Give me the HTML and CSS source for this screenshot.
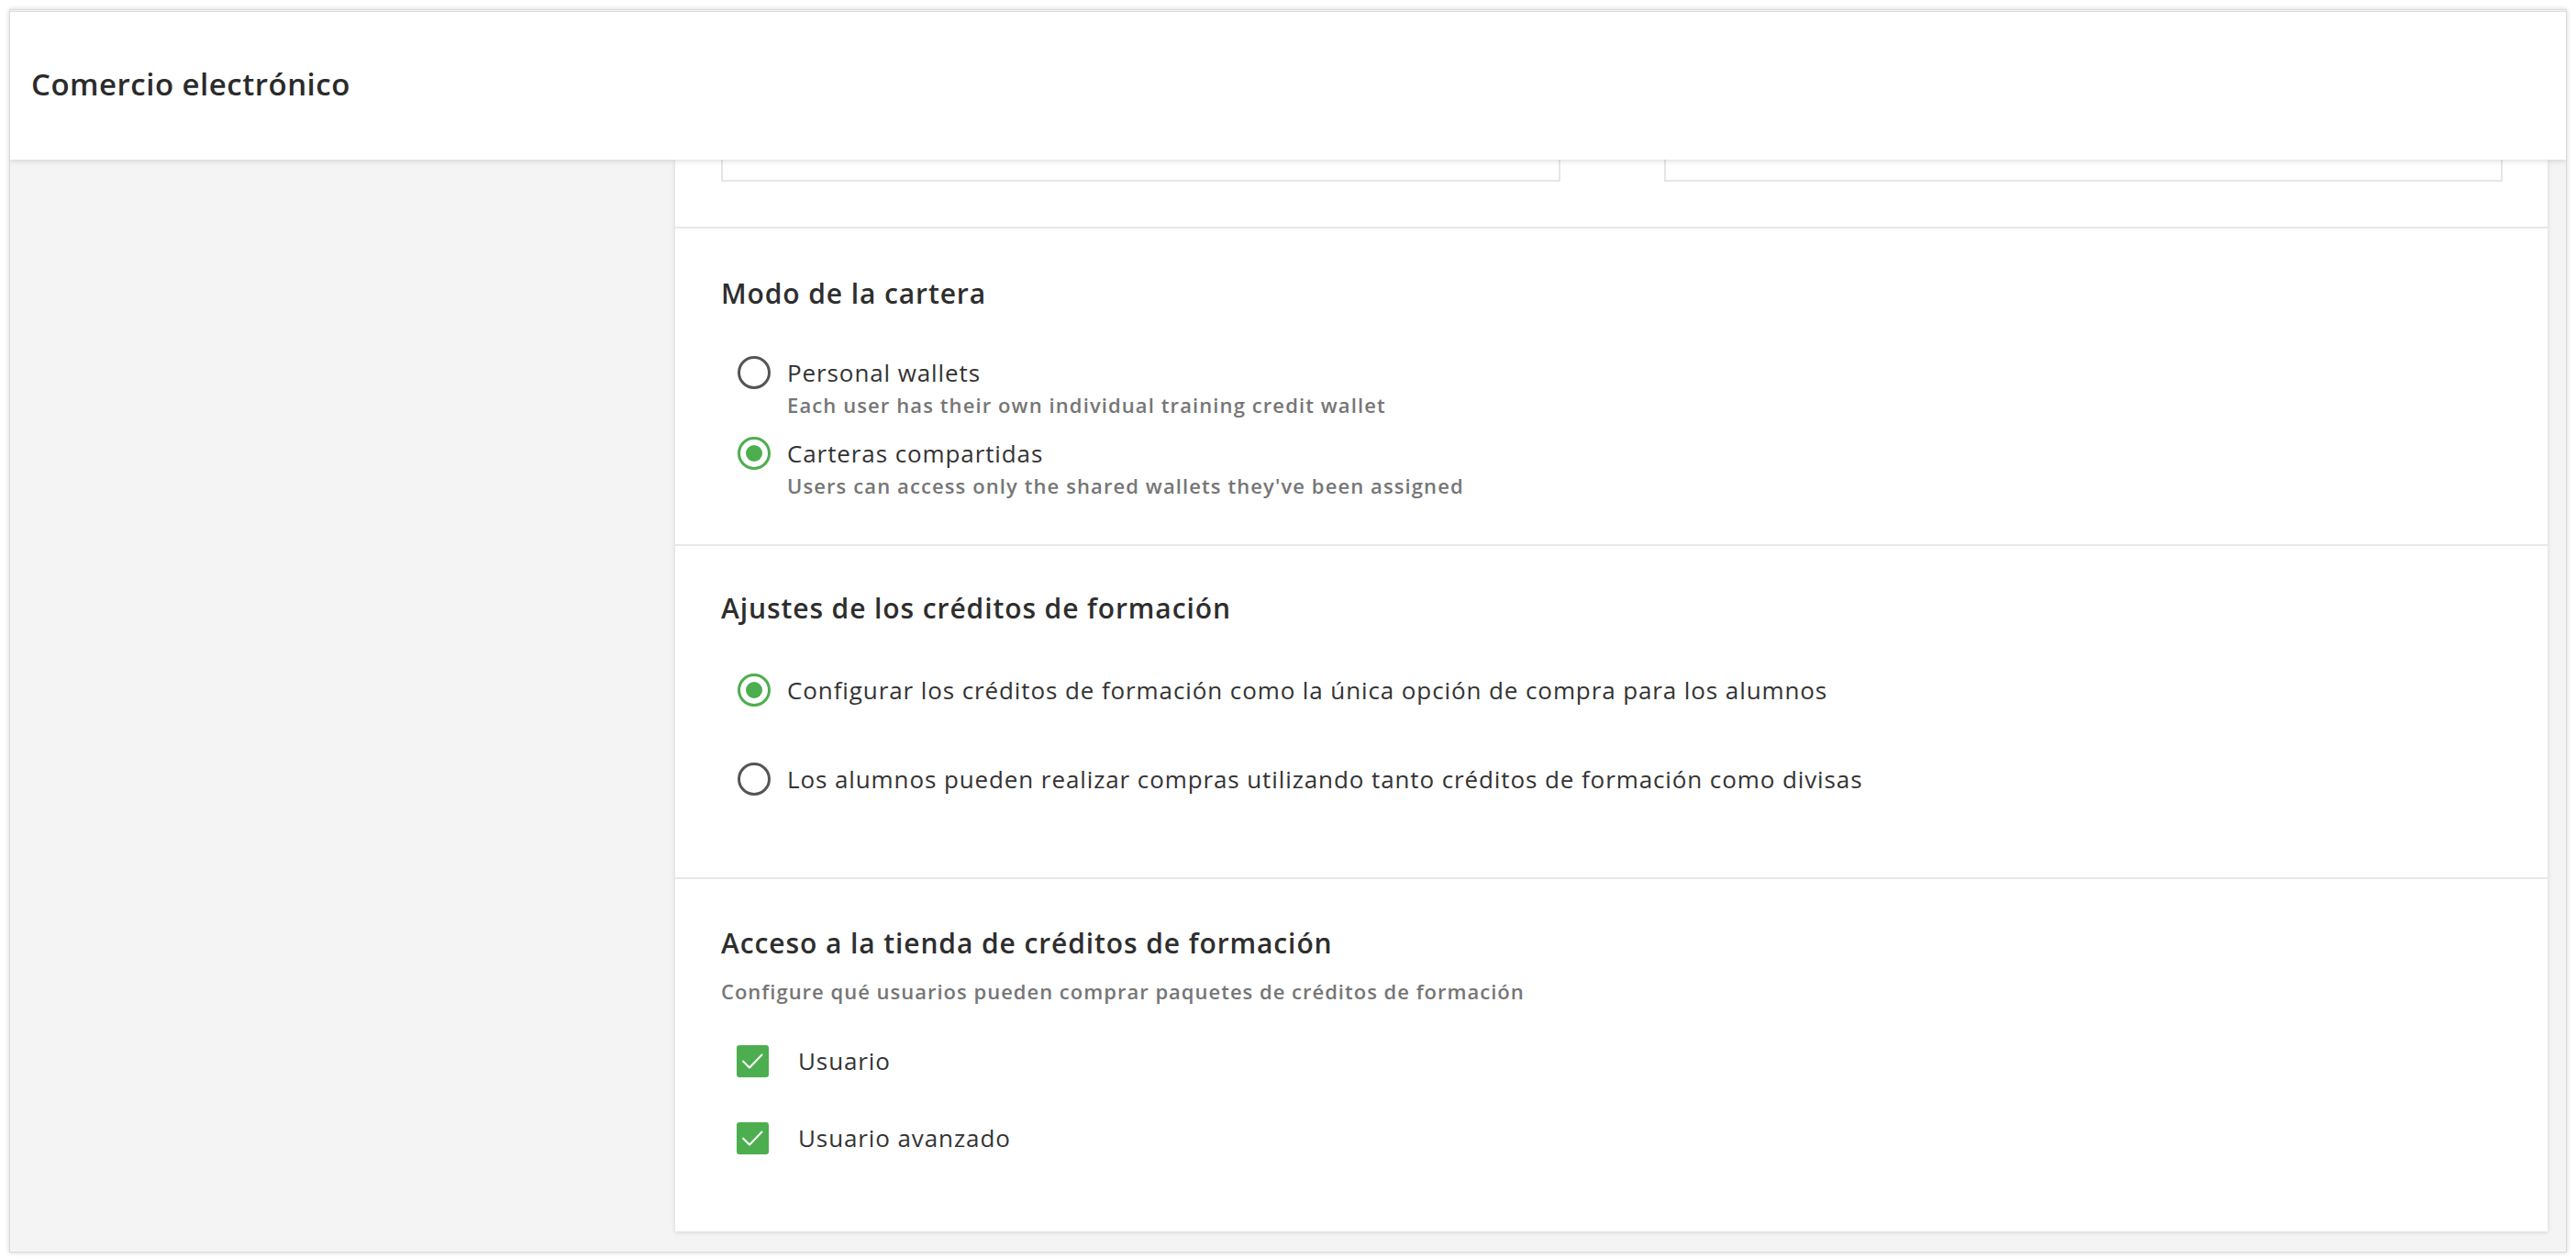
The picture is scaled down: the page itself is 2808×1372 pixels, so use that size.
FILE: index.html
```html
<!DOCTYPE html>
<html lang="es">
<head>
<meta charset="utf-8">
<title>Comercio electrónico</title>
<link rel="stylesheet" href="styles.css">
</head>
<body>
<div class="frame">
  <header class="topbar">
    <h1 class="title">Comercio electrónico</h1>
  </header>
  <div class="body">
    <aside class="side"></aside>
    <main class="card">
      <section class="section inputs-section">
        <div class="input-stub"></div>
        <div class="input-stub"></div>
      </section>

      <section class="section wallet">
        <h2 class="heading">Modo de la cartera</h2>
        <div class="options">
          <label class="option">
            <span class="radio"></span>
            <span class="option-text">
              <span class="option-label">Personal wallets</span>
              <span class="option-desc">Each user has their own individual training credit wallet</span>
            </span>
          </label>
          <label class="option">
            <span class="radio checked"></span>
            <span class="option-text">
              <span class="option-label">Carteras compartidas</span>
              <span class="option-desc">Users can access only the shared wallets they've been assigned</span>
            </span>
          </label>
        </div>
      </section>

      <section class="section credits">
        <h2 class="heading">Ajustes de los créditos de formación</h2>
        <div class="options spaced">
          <label class="option">
            <span class="radio checked"></span>
            <span class="option-label">Configurar los créditos de formación como la única opción de compra para los alumnos</span>
          </label>
          <label class="option">
            <span class="radio"></span>
            <span class="option-label">Los alumnos pueden realizar compras utilizando tanto créditos de formación como divisas</span>
          </label>
        </div>
      </section>

      <section class="section last">
        <h2 class="heading">Acceso a la tienda de créditos de formación</h2>
        <p class="section-desc">Configure qué usuarios pueden comprar paquetes de créditos de formación</p>
        <div class="checks">
          <label class="check-row">
            <span class="checkbox"><svg viewBox="0 0 35 35" width="35" height="35"><path d="M7 17.5l7 7L27.5 10.5" fill="none" stroke="#fff" stroke-width="2" stroke-linecap="round" stroke-linejoin="round"/></svg></span>
            <span class="option-label">Usuario</span>
          </label>
          <label class="check-row">
            <span class="checkbox"><svg viewBox="0 0 35 35" width="35" height="35"><path d="M7 17.5l7 7L27.5 10.5" fill="none" stroke="#fff" stroke-width="2" stroke-linecap="round" stroke-linejoin="round"/></svg></span>
            <span class="option-label">Usuario avanzado</span>
          </label>
        </div>
      </section>
    </main>
    <div class="gutter"></div>
  </div>
</div>
</body>
</html>
```

FILE: styles.css
```css
html, body {
  margin: 0;
  padding: 0;
  background: #ffffff;
  height: 100%;
}
body {
  font-family: "Open Sans", "Noto Sans", sans-serif;
  color: #333333;
  padding: 10px 10px 11px 10px;
  box-sizing: border-box;
  height: 1372px;
}
.frame {
  height: 100%;
  display: flex;
  flex-direction: column;
  border: 1px solid #d9d9d9;
  border-top: 3px double #dcdcdc;
  box-shadow: 0 0 5px rgba(0, 0, 0, 0.18);
  background: #f4f4f4;
  overflow: hidden;
}
.topbar {
  height: 161px;
  flex: none;
  background: #ffffff;
  display: flex;
  align-items: center;
  padding-left: 23px;
  position: relative;
  z-index: 2;
  box-shadow: 0 2px 5px rgba(0, 0, 0, 0.12);
}
.title {
  margin: 0;
  font-size: 33px;
  font-weight: 600;
  color: #2b2b2b;
  letter-spacing: 0.5px;
  position: relative;
  top: -2px;
}
.body {
  flex: 1;
  display: flex;
  padding-bottom: 22px;
}
.side {
  width: 725px;
  flex: none;
}
.gutter {
  width: 20px;
  flex: none;
}
.card {
  flex: 1;
  background: #ffffff;
  box-shadow: 0 1px 5px rgba(0, 0, 0, 0.14);
  padding: 0 49px 0 50px;
}
.section {
  border-bottom: 2px solid #e8e8e8;
  margin: 0 -49px 0 -50px;
  padding: 51px 49px 45px 50px;
}
.inputs-section {
  display: flex;
  gap: 113px;
  padding-top: 0;
  padding-bottom: 49px;
}
.input-stub {
  flex: 1;
  height: 22px;
  border: 2px solid #e6e6e6;
  border-top: none;
}
.wallet {
  padding-bottom: 47px;
}
.heading {
  margin: 0;
  font-size: 30px;
  line-height: 40px;
  font-weight: 600;
  color: #2e2e2e;
  letter-spacing: 0.9px;
}
.options {
  display: flex;
  flex-direction: column;
  gap: 18px;
  margin-top: 48px;
  padding-left: 18px;
}
.options.spaced {
  gap: 61px;
  margin-top: 51px;
}
.credits {
  padding-top: 48px;
  padding-bottom: 89px;
}
.option {
  display: flex;
  align-items: flex-start;
  gap: 18px;
}
.option-text {
  display: flex;
  flex-direction: column;
}
.option-label {
  font-size: 26px;
  line-height: 36px;
  color: #333333;
  letter-spacing: 0.9px;
}
.option-desc {
  font-size: 22px;
  line-height: 34px;
  font-weight: 600;
  color: #767676;
  letter-spacing: 1.1px;
}
.radio {
  flex: none;
  width: 36px;
  height: 36px;
  box-sizing: border-box;
  border: 3px solid #555555;
  border-radius: 50%;
  position: relative;
}
.radio.checked {
  border-color: #4cae4f;
}
.radio.checked::after {
  content: "";
  position: absolute;
  left: 6px;
  top: 6px;
  width: 18px;
  height: 18px;
  border-radius: 50%;
  background: #4cae4f;
}
.last {
  border-bottom: none;
  padding-top: 50px;
  padding-bottom: 60px;
}
.section-desc {
  margin: 15px 0 0 0;
  font-size: 22px;
  line-height: 34px;
  font-weight: 600;
  color: #767676;
  letter-spacing: 1px;
}
.checks {
  display: flex;
  flex-direction: column;
  gap: 48px;
  margin-top: 41px;
  padding-left: 17px;
}
.check-row {
  display: flex;
  align-items: center;
  gap: 32px;
}
.checkbox {
  flex: none;
  width: 35px;
  height: 35px;
  border-radius: 3px;
  background: #4cae4f;
  display: flex;
  align-items: center;
  justify-content: center;
}
.checkbox svg {
  display: block;
}
```
